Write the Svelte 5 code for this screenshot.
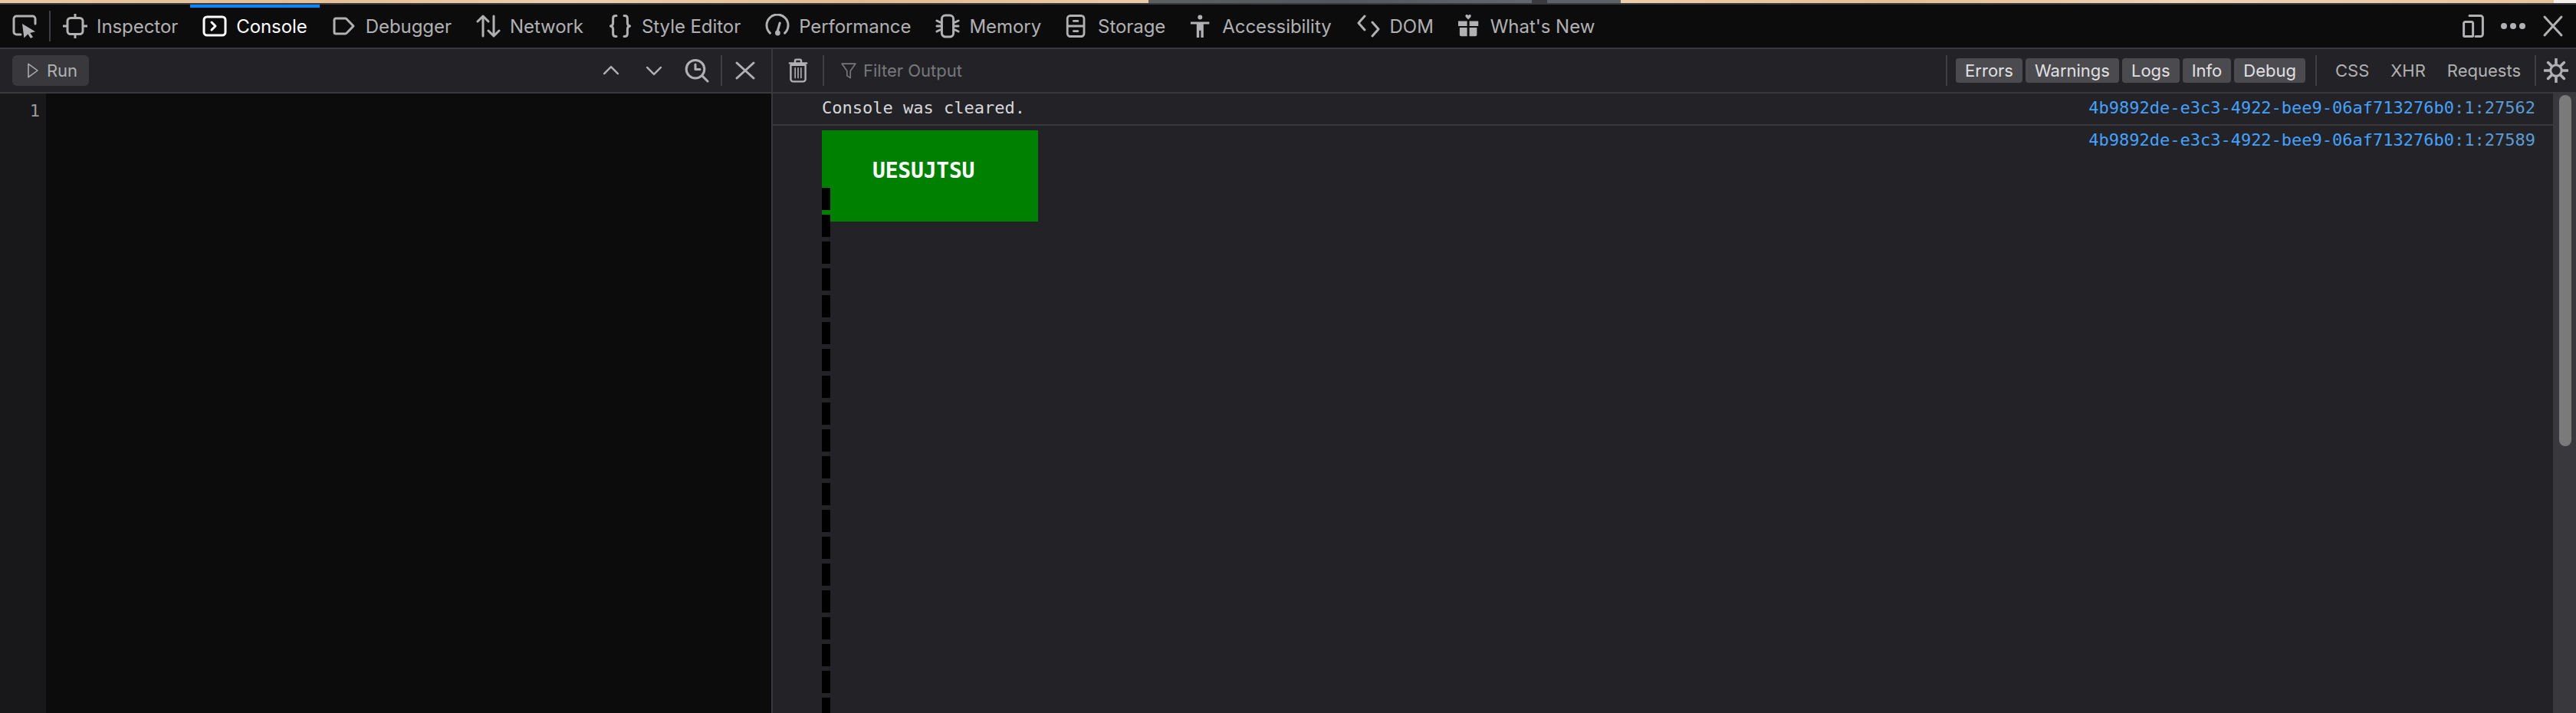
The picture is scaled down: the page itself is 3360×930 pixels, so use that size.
<script>
  const rr = (x, y, w, h, r) =>
    `M${x + r} ${y}h${w - 2 * r}a${r} ${r} 0 0 1 ${r} ${r}v${h - 2 * r}a${r} ${r} 0 0 1 -${r} ${r}h-${w - 2 * r}a${r} ${r} 0 0 1 -${r} -${r}v-${h - 2 * r}a${r} ${r} 0 0 1 ${r} -${r}z`;

  const tabs = [
    { label: 'Inspector', stroke: rr(3, 2.75, 10, 10.5, 2) + 'M0 8h3M13 8h3M8 0v2.75M8 13.25V16' },
    { label: 'Console', active: true, stroke: rr(1, 2, 14, 12, 2) + 'M6 5.5 8.5 8 6 10.5' },
    { label: 'Debugger', stroke: 'M2.5 3h6.2a1 1 0 0 1 .8.4L14 8l-4.5 4.6a1 1 0 0 1-.8.4H2.5a1 1 0 0 1-1-1V4a1 1 0 0 1 1-1z' },
    { label: 'Network', stroke: 'M4.5 14.5V1.5M1 5l3.5-3.5L8 5M11.5 1.5v13M8 11l3.5 3.5L15 11' },
    { label: 'Style Editor', stroke: 'M5.5 1.2H5C3.8 1.2 3.3 2 3.3 3v3c0 1-.6 1.8-1.6 2 1 .2 1.6 1 1.6 2v3c0 1 .5 1.8 1.7 1.8h.5M10.5 1.2h.5c1.2 0 1.7.8 1.7 1.8v3c0 1 .6 1.8 1.6 2-1 .2-1.6 1-1.6 2v3c0 1-.5 1.8-1.7 1.8h-.5' },
    { label: 'Performance', stroke: 'M3.2 12.6A7 7 0 1 1 12.8 12.6M8 11.5 9.6 6', fill: 'M6.5 12.5a1.7 1.7 0 1 0 3.4 0a1.7 1.7 0 1 0 -3.4 0z' },
    { label: 'Memory', stroke: rr(4.2, 1, 7.6, 14, 2.4) + 'M1 4.5 3 5.5M1 8h3M1 11.5 3 10.5M15 4.5 13 5.5M15 8h-3M15 11.5 13 10.5' },
    { label: 'Storage', narrow: true, stroke: rr(1.2, .8, 11.6, 14.4, 2) + 'M1.2 8h11.6M5.5 4.5h3M5.5 11.5h3' },
    { label: 'Accessibility', narrow: true, fill: 'M5.5 1.8a1.6 1.6 0 1 0 3.2 0a1.6 1.6 0 1 0 -3.2 0zM.5 5h13v1.6H9.5v9.4H7.7v-5H6.5v5H4.7V6.6H.5z' },
    { label: 'DOM', stroke: 'M5.5 1.5 1.5 6l4 4.5M10.5 5.5l4 4.5-4 4.5' },
    { label: "What's New", narrow: true, fill: 'M0 4.5h6.2V8H0zM7.8 4.5H14V8H7.8zM1 9h5.2v6H2a1 1 0 0 1-1-1zM7.8 9H13v5a1 1 0 0 1-1 1H7.8zM7 3.4 5.4 1.8C4.6 1 5.1 0 6 0c.5 0 .8.3 1 .7.2-.4.5-.7 1-.7.9 0 1.4 1 .6 1.8z' }
  ];

  const filters = ['Errors', 'Warnings', 'Logs', 'Info', 'Debug'];
  const netFilters = ['CSS', 'XHR', 'Requests'];
  const blocks = Array.from({ length: 20 }, (_, i) => i);
  const uuid = '4b9892de-e3c3-4922-bee9-06af713276b0';
</script>

<div class="app">
  <div class="wallpaper">
    <span class="wp warm"></span><span class="wp grey"></span><span class="wp notch"></span><span class="wp grey2"></span><span class="wp warm2"></span><span class="wp white"></span>
  </div>

  <nav class="tabs">
    <button class="picker" aria-label="Pick an element">
      <svg viewBox="0 0 16 16" class="ico">
        <path class="s" d="M5.5 13.5H2.8A1.8 1.8 0 0 1 1 11.7V3.3A1.8 1.8 0 0 1 2.8 1.5h10.4A1.8 1.8 0 0 1 15 3.3v3.2" />
        <path class="f" d="M6.5 6.5 15 11.6l-3.4.9 1.9 2.6-1.5.9-1.8-2.7-2.5 2.4z" />
      </svg>
    </button>
    <span class="sep tabsep"></span>
    {#each tabs as t}
      <button class="tab" class:active={t.active}>
        <svg viewBox="0 0 16 16" class="ico" class:narrowico={t.narrow}>
          {#if t.fill}<path class="f" d={t.fill} />{/if}
          {#if t.stroke}<path class="s" d={t.stroke} />{/if}
        </svg>
        <span>{t.label}</span>
      </button>
    {/each}
    <span class="grow"></span>
    <button class="iconbtn dock" aria-label="Dock">
      <svg viewBox="0 0 16 16" class="ico">
        <path class="s" d="M5.5 1.2h7.2a1.5 1.5 0 0 1 1.5 1.5v10.6a1.5 1.5 0 0 1-1.5 1.5H9.5" />
        <path class="s" d="M2.8 5.2h4a1 1 0 0 1 1 1v8.1a.5.5 0 0 1-.5.5H2.3a.5.5 0 0 1-.5-.5V6.2a1 1 0 0 1 1-1z" />
      </svg>
    </button>
    <button class="iconbtn dots" aria-label="More">
      <svg viewBox="0 0 16 16" class="ico"><path class="f" d="M0 8a2 2 0 1 0 4 0a2 2 0 1 0 -4 0zM6 8a2 2 0 1 0 4 0a2 2 0 1 0 -4 0zM12 8a2 2 0 1 0 4 0a2 2 0 1 0 -4 0z" /></svg>
    </button>
    <button class="iconbtn closeall" aria-label="Close">
      <svg viewBox="0 0 16 16" class="ico"><path class="s" d="M2.5 2 13.5 14M13.5 2 2.5 14" /></svg>
    </button>
  </nav>

  <div class="panels">
    <section class="editor">
      <div class="bar">
        <button class="run">
          <svg viewBox="0 0 16 16" class="runico"><path class="s thin" d="M4 2.2 12 8l-8 5.8z" /></svg>
          Run
        </button>
        <span class="grow"></span>
        <button class="iconbtn w56" aria-label="Previous">
          <svg viewBox="0 0 16 16" class="ico small"><path class="s" d="M2.5 10.5 8 5l5.5 5.5" /></svg>
        </button>
        <button class="iconbtn w56" aria-label="Next">
          <svg viewBox="0 0 16 16" class="ico small"><path class="s" d="M2.5 5.5 8 11l5.5-5.5" /></svg>
        </button>
        <button class="iconbtn w56" aria-label="History">
          <svg viewBox="0 0 16 16" class="ico"><path class="s" d="M7 1.2a5.9 5.9 0 1 0 0 11.8a5.9 5.9 0 1 0 0 -11.8zM7 4v3.3h3M11.3 11.3 15 15" /></svg>
        </button>
        <span class="sep gapsep"></span>
        <button class="iconbtn closeed" aria-label="Close editor">
          <svg viewBox="0 0 16 16" class="ico"><path class="s" d="M2.5 3 13.5 13M13.5 3 2.5 13" /></svg>
        </button>
      </div>
      <div class="code">
        <div class="gutter">1</div>
      </div>
    </section>

    <section class="console">
      <div class="bar consolebar">
        <button class="iconbtn trash" aria-label="Clear">
          <svg viewBox="0 0 16 20" class="trashico">
            <path class="s" d="M2 5.5h12v11.5a2 2 0 0 1-2 2H4a2 2 0 0 1-2-2zM1 4h14M5.5 3.5V2a1 1 0 0 1 1-1h3a1 1 0 0 1 1 1v1.5" />
            <path class="s thin" d="M5.6 8v8M8 8v8M10.4 8v8" />
          </svg>
        </button>
        <span class="sep"></span>
        <svg viewBox="0 0 16 16" class="filterico"><path class="s dim" d="M1.5 1.5h13L9.6 8.3V15L6.4 13V8.3z" /></svg>
        <span class="placeholder">Filter Output</span>
        <span class="grow"></span>
        <span class="sep"></span>
        <div class="filters">
          {#each filters as f}<button class="chip">{f}</button>{/each}
        </div>
        <span class="sep"></span>
        <div class="netfilters">
          {#each netFilters as f}<button class="net">{f}</button>{/each}
        </div>
        <span class="sep"></span>
        <button class="iconbtn gear" aria-label="Settings">
          <svg viewBox="0 0 16 16" class="ico">
            <path class="s" d="M8 4.4a3.6 3.6 0 1 0 0 7.2a3.6 3.6 0 1 0 0 -7.2z" />
            <path class="s wide" d="M8 .6v3M8 12.4v3M.6 8h3M12.4 8h3M2.8 2.8l2.1 2.1M11.1 11.1l2.1 2.1M13.2 2.8l-2.1 2.1M4.9 11.1l-2.1 2.1" />
          </svg>
        </button>
      </div>
      <div class="output">
        <div class="messages">
          <div class="row first">
            <span class="msg">Console was cleared.</span>
            <span class="loc">{uuid}<span class="pos">:1:27562</span></span>
          </div>
          <div class="row second">
            <div class="banner">UESUJTSU</div>
            <span class="loc">{uuid}<span class="pos">:1:27589</span></span>
          </div>
          <div class="blocks">
            {#each blocks as b (b)}<i></i>{/each}
          </div>
        </div>
        <div class="scroll"><div class="thumb"></div></div>
      </div>
    </section>
  </div>
</div>

<style>
  :global(body) { margin: 0; background: #232327; }
  .app {
    width: 3360px; height: 930px; overflow: hidden;
    display: flex; flex-direction: column;
    font-family: Inter, "Noto Sans", sans-serif;
    font-size: 22px; color: #b1b1b3;
  }
  button {
    font: inherit; color: inherit; background: none; border: 0; padding: 0; margin: 0;
    display: flex; align-items: center; justify-content: center;
  }
  .wallpaper { height: 4px; display: flex; border-bottom: 2px solid #38383d; flex: none; }
  .wp { display: block; height: 4px; }
  .warm { width: 1498px; background: linear-gradient(90deg, #e9c9a4, #e4bd93 25%, #ecd0ae 50%, #e3bb90 75%, #ebcca8); }
  .grey { width: 500px; background: linear-gradient(90deg, #5d5f61, #55585a 50%, #65686a); }
  .notch { width: 20px; background: #3b3b3e; }
  .grey2 { width: 96px; background: #5f6264; }
  .warm2 { width: 1217px; background: linear-gradient(90deg, #eecdaa, #e6bf94 30%, #efd4b6 60%, #e8c49c); }
  .white { flex: 1; background: #f4f1ec; }

  .tabs {
    height: 56px; flex: none; display: flex; align-items: center;
    background: #0c0c0d; border-bottom: 2px solid #38383d;
    position: relative;
  }
  .ico { width: 32px; height: 32px; display: block; flex: none; }
  .ico.small { width: 26px; height: 26px; }
  .s { fill: none; stroke: currentColor; stroke-width: 1.5; stroke-linecap: round; stroke-linejoin: round; }
  .f { fill: currentColor; stroke: none; }
  .thin { stroke-width: 1; }
  .wide { stroke-width: 1.8; }
  .dim { color: #77777c; stroke-width: 1.2; }

  .picker { width: 64px; height: 56px; flex: none; }
  .sep { width: 2px; height: 40px; background: #3e3e43; flex: none; }
  .tabsep { margin-right: 0; }
  .tab {
    height: 56px; padding: 0 16px; gap: 12px; flex: none; position: relative; white-space: nowrap;
    font-size: 24px; letter-spacing: -0.06px;
  }
  .tab.active { color: #fff; }
  .tab.active::before {
    content: ""; position: absolute; left: 0; right: 0; top: 0; height: 4px; background: #0a84ff;
  }
  .narrowico { width: 30px; }
  .grow { flex: 1; }
  .iconbtn { flex: none; height: 40px; }
  .dock { width: 32px; margin-right: 20px; }
  .dots { width: 32px; margin-right: 24px; }
  .closeall { width: 24px; margin-right: 18px; }

  .panels { flex: 1; min-height: 0; display: grid; grid-template-columns: 1006px 1fr; }
  .bar {
    height: 56px; display: flex; align-items: center; box-sizing: content-box;
    background: #232327; border-bottom: 2px solid #38383d;
  }
  .editor { display: flex; flex-direction: column; min-width: 0; }
  .editor .bar { padding-left: 16px; }
  .run {
    width: 100px; height: 40px; border-radius: 6px; background: #38383d; gap: 6px;
    color: #b1b1b3;
  }
  .runico { width: 24px; height: 28px; }
  .w56 { width: 56px; }
  .gapsep { margin-left: 3px; }
  .closeed { width: 60px; margin-right: 4px; }
  .code { flex: 1; background: #0c0c0d; display: flex; }
  .gutter {
    width: 52px; padding-right: 8px; background: #18181a; text-align: right; color: #9a9a9e;
    font: 22px/46px "DejaVu Sans Mono", monospace;
  }

  .console { display: flex; flex-direction: column; min-width: 0; border-left: 2px solid #38383d; }
  .trash { width: 26px; margin: 0 19px 0 20px; }
  .trashico { width: 26px; height: 32px; display: block; }
  .filterico { width: 22px; height: 22px; margin: 0 8px 0 21px; }
  .placeholder { color: #77777c; }
  .filters { display: flex; gap: 4px; margin: 0 13px 0 11px; }
  .chip { height: 32px; padding: 0 12px; border-radius: 4px; background: #4a4a4f; color: #e0e0e2; }
  .netfilters { display: flex; gap: 4px; margin: 0 6px 0 12px; }
  .net { height: 32px; padding: 0 12px; color: #b1b1b3; }
  .gear { width: 52px; }

  .output { flex: 1; min-height: 0; display: flex; }
  .messages { flex: 1; min-width: 0; position: relative; overflow: hidden; font: 22px "DejaVu Sans Mono", monospace; }
  .row { display: flex; justify-content: space-between; padding: 0 23px 0 64px; }
  .first { height: 40px; line-height: 38px; border-bottom: 2px solid #38383d; }
  .msg { color: #d7d7db; }
  .second { line-height: 38px; }
  .loc { color: #45a1ff; white-space: nowrap; }
  .pos { color: #5b9bd5; }
  .banner {
    margin-top: 6px; width: 282px; height: 119px; box-sizing: border-box;
    background: #008000; color: #fff; font-weight: 700; font-size: 28px; letter-spacing: -0.2px;
    padding-left: 66px; line-height: 106px;
  }
  .blocks {
    position: absolute; left: 64px; top: 123px;
    display: flex; flex-direction: column; gap: 6px;
  }
  .blocks i { display: block; width: 11px; height: 29px; background: #000; }
  .scroll { width: 30px; flex: none; background: #38383d; box-sizing: border-box; padding: 2px 6px 0 8px; }
  .thumb { height: 458px; border-radius: 8px; background: #7a7a7a; }
</style>
